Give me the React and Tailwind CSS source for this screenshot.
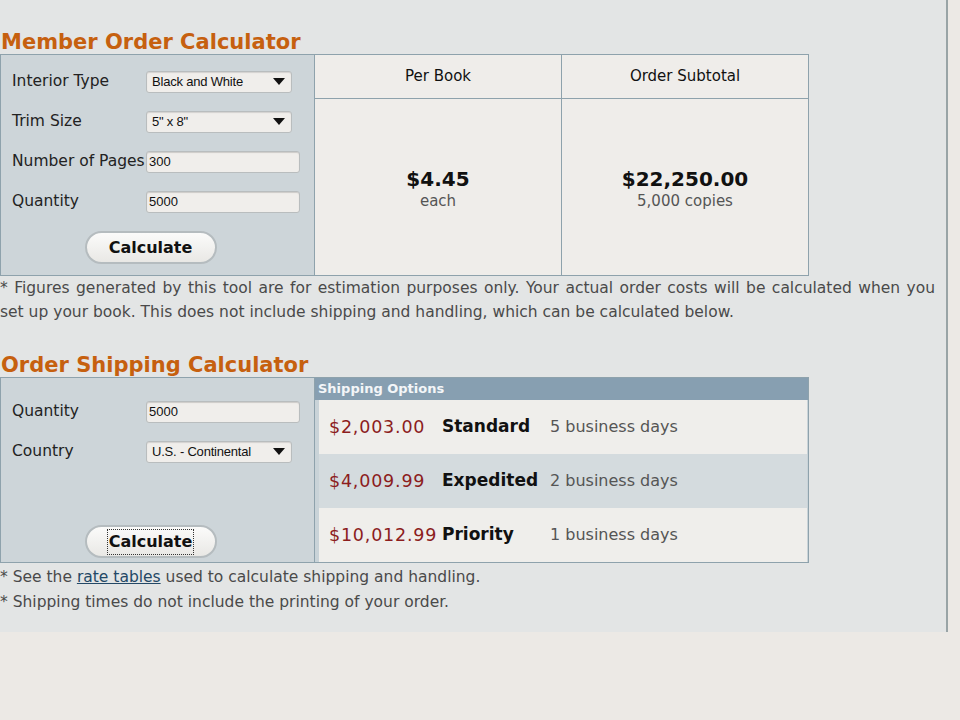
import React from "react";

const font = { fontFamily: '"DejaVu Sans", Verdana, sans-serif' };

function Select({ value, w = "w-[146px]" }) {
  return (
    <div className={`${w} h-[22px] flex items-center justify-between pl-[5px] pr-[6px] bg-[#f0eeeb] border border-[#b9bdbe] rounded-[3px] shadow-[inset_0_1px_1px_rgba(0,0,0,0.12)] text-[13px] text-[#111] font-['Liberation_Sans',Arial,sans-serif] tracking-[-0.2px]`}>
      <span>{value}</span>
      <svg width="12" height="8" viewBox="0 0 12 8"><path d="M0 0 L12 0 L6 7 Z" fill="#111" /></svg>
    </div>
  );
}

function Input({ value }) {
  return (
    <div className="w-[154px] h-[22px] flex items-center pl-[2px] bg-[#f0eeeb] border border-[#b9bdbe] rounded-[3px] shadow-[inset_0_1px_1px_rgba(0,0,0,0.15)] text-[13px] text-[#111] font-['Liberation_Sans',Arial,sans-serif]">
      {value}
    </div>
  );
}

function Row({ label, children }) {
  return (
    <div className="flex items-center h-[22px]">
      <div className="w-[145px] shrink-0 pl-[11px] text-[15.5px] text-[#222] whitespace-nowrap">{label}</div>
      {children}
    </div>
  );
}

function CalcButton({ focused }) {
  return (
    <div className="flex justify-center pr-[14px]">
      <div className="w-[132px] h-[33px] rounded-full border-2 border-[#b5bcbf] bg-gradient-to-b from-[#fbfbfa] to-[#e9e8e5] flex items-center justify-center">
        <span className={`text-[16px] font-bold text-[#111] ${focused ? "outline-1 outline-dotted outline-[#333] px-[1px]" : ""}`}>Calculate</span>
      </div>
    </div>
  );
}

export default function App() {
  return (
    <div className="w-[960px] h-[720px] bg-[#ece9e5] overflow-hidden" style={font}>
      <div className="w-[948px] h-[632px] bg-[#e3e5e5] border-r-2 border-[#99a4a6] pt-[30px]">
        <h2 className="text-[21px] leading-[24px] font-bold text-[#c6600f] pl-[1px]">Member Order Calculator</h2>
        <div className="w-[809px] h-[222px] flex border border-[#8ea2ac]">
          <div className="w-[314px] bg-[#cdd5d9] border-r border-[#8ea2ac] pt-[16px] flex flex-col gap-[18px]">
            <Row label="Interior Type"><Select value="Black and White" /></Row>
            <Row label="Trim Size"><Select value={'5" x 8"'} /></Row>
            <Row label="Number of Pages"><Input value="300" /></Row>
            <Row label="Quantity"><Input value="5000" /></Row>
            <CalcButton />
          </div>
          <div className="flex-1 flex flex-col bg-[#efedea] border-r border-[#8ea2ac]">
            <div className="h-[44px] border-b border-[#8ea2ac] flex items-center justify-center text-[15px] text-[#111]">Per Book</div>
            <div className="flex-1 flex flex-col items-center justify-center pt-[3px]">
              <div className="text-[20px] leading-[24px] font-bold text-[#111]">$4.45</div>
              <div className="text-[15px] leading-[20px] text-[#555]">each</div>
            </div>
          </div>
          <div className="flex-1 flex flex-col bg-[#efedea]">
            <div className="h-[44px] border-b border-[#8ea2ac] flex items-center justify-center text-[15px] text-[#111]">Order Subtotal</div>
            <div className="flex-1 flex flex-col items-center justify-center pt-[3px]">
              <div className="text-[20px] leading-[24px] font-bold text-[#111]">$22,250.00</div>
              <div className="text-[15px] leading-[20px] text-[#555]">5,000 copies</div>
            </div>
          </div>
        </div>
        <div className="w-[935px] text-[15.5px] leading-[24px] text-[#4a4a4a]">
          <p className="text-justify [text-align-last:justify]">* Figures generated by this tool are for estimation purposes only. Your actual order costs will be calculated when you</p>
          <p>set up your book. This does not include shipping and handling, which can be calculated below.</p>
        </div>
        <h2 className="mt-[29px] text-[21px] leading-[24px] font-bold text-[#c6600f] pl-[1px]">Order Shipping Calculator</h2>
        <div className="w-[809px] h-[186px] flex border border-[#8ea2ac]">
          <div className="w-[314px] bg-[#cdd5d9] border-r border-[#8ea2ac] pt-[23px] flex flex-col">
            <Row label="Quantity"><Input value="5000" /></Row>
            <div className="mt-[18px]"><Row label="Country"><Select value="U.S. - Continental" /></Row></div>
            <div className="mt-[62px]"><CalcButton focused /></div>
          </div>
          <div className="flex-1 flex flex-col bg-[#c9d3d8]">
            <div className="h-[22px] bg-[#879fb1] flex items-center pl-[3px] text-[13px] font-bold text-[#f4f6f8]">Shipping Options</div>
            <div className="flex-1 flex flex-col pl-[4px] pr-[1px]">
              {[
                ["$2,003.00", "Standard", "5 business days", "bg-[#efeeeb]"],
                ["$4,009.99", "Expedited", "2 business days", "bg-[#d4dbde]"],
                ["$10,012.99", "Priority", "1 business days", "bg-[#efeeeb]"],
              ].map(([p, n, d, bg]) => (
                <div key={n} className={`flex-1 flex items-center pl-[10px] ${bg}`}>
                  <span className="w-[113px] text-[17.5px] tracking-[0.8px] text-[#8c1d1d] whitespace-nowrap">{p}</span>
                  <span className="w-[108px] text-[17px] font-bold text-[#111]">{n}</span>
                  <span className="text-[16px] text-[#555]">{d}</span>
                </div>
              ))}
            </div>
          </div>
        </div>
        <div className="text-[15.5px] leading-[25px] text-[#4a4a4a] pt-[2px]">
          <p>* See the <span className="underline text-[#234866]">rate tables</span> used to calculate shipping and handling.</p>
          <p>* Shipping times do not include the printing of your order.</p>
        </div>
      </div>
    </div>
  );
}
